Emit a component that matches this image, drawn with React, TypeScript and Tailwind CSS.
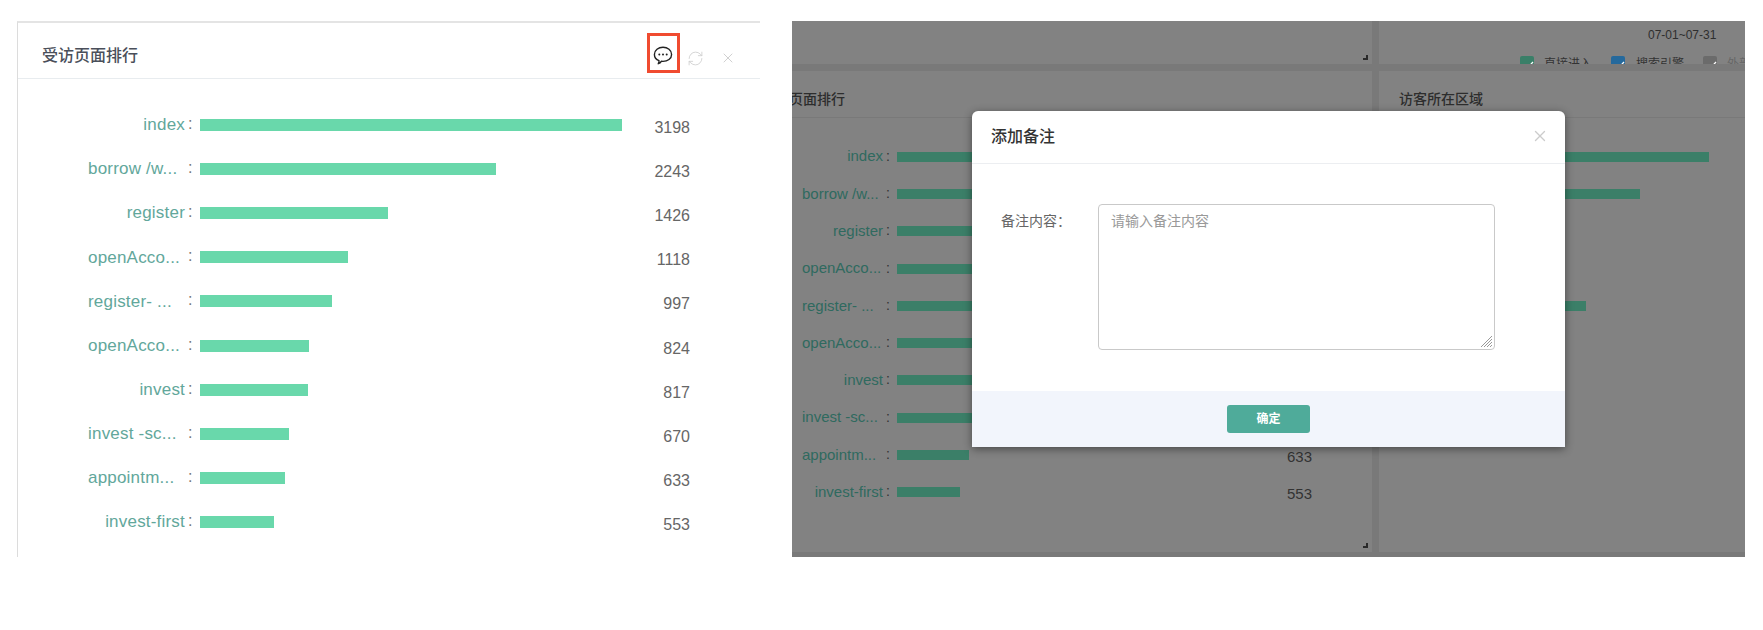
import { RefreshCw, X } from "lucide-react"

const pages = [
  { name: "index", width: 422, value: 3198 },
  { name: "borrow /w...", width: 296, value: 2243, cut: true },
  { name: "register", width: 188, value: 1426 },
  { name: "openAcco...", width: 148, value: 1118, cut: true },
  { name: "register- ...", width: 132, value: 997, cut: true },
  { name: "openAcco...", width: 109, value: 824, cut: true },
  { name: "invest", width: 108, value: 817 },
  { name: "invest -sc...", width: 89, value: 670, cut: true },
  { name: "appointm...", width: 85, value: 633, cut: true },
  { name: "invest-first", width: 74, value: 553 },
]

const regionBars = [229, 160, 60, 50, 106]

function ChatIcon() {
  return (
    <svg width="20" height="19" viewBox="0 0 20 19" fill="none" className="text-[#222]">
      <path
        d="M10 1.2c4.600 0 8.600 3 8.600 7.200s-4 7-8.600 7c-.6 0-1.200 0-1.700-.1-.5.9-1.700 2-3 2.400.5-.9.8-2 .7-3.100C3 13.400 1.400 11.100 1.400 8.400 1.400 4.200 5.400 1.200 10 1.200z"
        stroke="currentColor"
        strokeWidth="1.4"
        strokeLinejoin="round"
      />
      <circle cx="6.300" cy="8.500" r="1" fill="currentColor" />
      <circle cx="10" cy="8.500" r="1" fill="currentColor" />
      <circle cx="13.700" cy="8.500" r="1" fill="currentColor" />
    </svg>
  )
}

function Corner() {
  return <div className="h-[5px] w-[5px] border-b-2 border-r-2 border-[#2a2a2a]" />
}

function LegendBox({ color }: { color: string }) {
  return (
    <div className={"flex h-[14px] w-[14px] shrink-0 items-end justify-end rounded-[2px] " + color}>
      <svg width="10" height="12" viewBox="0 0 10 12" fill="none">
        <path d="M1 8l2.500 2L9 4" stroke="#fff" strokeWidth="1.300" />
      </svg>
    </div>
  )
}

export default function App() {
  return (
    <div className="flex h-[630px] w-[1763px] overflow-hidden bg-white pt-[21px] font-['Liberation_Sans','Noto_Sans_CJK_SC',sans-serif]">
      {/* left: the widget on its own */}
      <section className="ml-[17px] h-[536px] w-[743px] border-l border-t-2 border-[#e4e4e4] border-l-[#dcdcdc]">
        <header className="flex h-[56px] border-b border-[#e8ecef]">
          <h3 className="ml-[24px] mt-[21px] text-base leading-6 font-medium text-[#4a4f5a]">受访页面排行</h3>
          <div className="ml-auto mr-[14px] mt-[10px] flex">
            <div className="flex h-[40px] w-[33px] items-center justify-center border-[3px] border-[#f04b30] pt-1 pr-[2px]">
              <ChatIcon />
            </div>
            <div className="flex w-[30px] items-center justify-center pt-[5px]">
              <RefreshCw size={17} strokeWidth={1.2} className="text-[#cfcfcf]" />
            </div>
            <div className="flex w-[36px] items-center justify-center pt-[5px]">
              <X size={16} strokeWidth={1} className="text-[#b8b8b8]" />
            </div>
          </div>
        </header>
        <div className="pt-[24px]">
          {pages.map((p, i) => (
            <div key={i} className="flex h-[44.1px] items-center">
              <span className={"ml-[70px] w-[97px] whitespace-nowrap text-[17px] tracking-[0.2px] text-[#62a79b] " + (p.cut ? "text-left" : "text-right")}>
                {p.name}
              </span>
              <span className="w-[15px] pb-[2px] pl-[3px] text-base text-[#777]">:</span>
              <div className="h-3 bg-[#69d8ab]" style={{ width: p.width }} />
              <span className="ml-auto mr-[70px] pt-[6px] text-base text-[#666]">{p.value}</span>
            </div>
          ))}
        </div>
      </section>

      {/* right: the same dashboard behind the dimmed dialog */}
      <section className="relative ml-[32px] flex h-[536px] w-[953px] flex-col bg-[#797979]">
        <div className="flex h-[43px]">
          <div className="flex w-[580px] items-end justify-end bg-[#828282] pb-[4px] pr-[4px]">
            <Corner />
          </div>
          <div className="ml-[7px] flex-1 overflow-hidden bg-[#828282] pl-[141px]">
            <div className="pl-[128px] pt-[7px] text-xs leading-[14px] text-[#2e2e2e]">07-01~07-31</div>
            <div className="mt-[14px] flex items-start text-xs leading-[16px] text-[#333]">
              <LegendBox color="bg-[#3a7f68]" />
              <span className="ml-[10px] w-[58px] shrink-0 whitespace-nowrap">直接进入</span>
              <div className="ml-[9px]">
                <LegendBox color="bg-[#25699c]" />
              </div>
              <span className="ml-[11px] w-[56px] shrink-0 whitespace-nowrap">搜索引擎</span>
              <div className="ml-[11px]">
                <LegendBox color="bg-[#6b6b6b]" />
              </div>
              <span className="ml-[10px] shrink-0 whitespace-nowrap text-[#666]">外部链接</span>
            </div>
          </div>
        </div>
        <div className="flex min-h-0 flex-1 pt-[7px] pb-[5px]">
          <div className="flex w-[580px] flex-col bg-[#828282]">
            <div className="flex h-[47px] items-center overflow-hidden border-b border-[#797979]">
              <h3 className="-ml-[3px] pt-[9px] text-sm font-medium text-[#2d2d2d]">页面排行</h3>
            </div>
            <div className="pt-[20px]">
              {pages.map((p, i) => (
                <div key={i} className="flex h-[37.3px] items-center">
                  <span className={"ml-[10px] w-[81px] whitespace-nowrap text-[15px] text-[#2f6a5f] " + (p.cut ? "text-left" : "text-right")}>
                    {p.name}
                  </span>
                  <span className="w-[14px] pb-[2px] pl-[3px] text-sm text-[#333]">:</span>
                  <div className="h-[10px] bg-[#3b7f68]" style={{ width: p.width * 0.85 }} />
                  <span className="ml-auto mr-[60px] pt-1 text-[15px] text-[#333]">{p.value}</span>
                </div>
              ))}
            </div>
            <div className="mt-auto flex justify-end pb-[4px] pr-[4px]">
              <Corner />
            </div>
          </div>
          <div className="ml-[7px] flex flex-1 flex-col bg-[#828282]">
            <div className="flex h-[47px] items-center border-b border-[#797979] pl-[20px]">
              <h3 className="pt-[9px] text-sm font-medium text-[#2d2d2d]">访客所在区域</h3>
            </div>
            <div className="pt-[20px]">
              {regionBars.map((w, i) => (
                <div key={i} className="flex h-[37.3px] items-center pl-[101px]">
                  <div className="h-[10px] bg-[#3b7f68]" style={{ width: w }} />
                </div>
              ))}
            </div>
          </div>
        </div>

        {/* dialog */}
        <div className="absolute left-[180px] top-[90px] flex h-[336px] w-[593px] flex-col rounded-t-md bg-white shadow-[0_2px_8px_rgba(0,0,0,0.45)]">
          <div className="flex h-[53px] items-center justify-between border-b border-[#eceef1] pl-[19px] pr-[16px]">
            <h4 className="text-base font-medium text-[#333]">添加备注</h4>
            <X size={18} strokeWidth={1.8} className="-mt-[2px] text-[#cccccc]" />
          </div>
          <div className="flex flex-1 pt-[40px]">
            <label className="ml-[29px] w-[97px] pt-[7px] text-sm leading-5 text-[#666]">备注内容：</label>
            <div className="relative h-[146px] w-[397px]">
              <textarea
                placeholder="请输入备注内容"
                className="h-full w-full resize-none rounded border border-[#c9c9c9] px-3 py-[6px] text-sm leading-5 placeholder:text-[#999]"
              />
              <svg width="13" height="13" viewBox="0 0 13 13" className="absolute bottom-[2px] right-[2px] text-[#999]" stroke="currentColor">
                <path d="M1 12L12 1M4 12l8-8M7 12l5-5M10 12l2-2" />
              </svg>
            </div>
          </div>
          <div className="flex h-[56px] items-center justify-center bg-[#f2f5fc]">
            <button className="h-[28px] w-[83px] rounded-[3px] bg-[#4fab9a] text-xs font-bold text-white">确定</button>
          </div>
        </div>
      </section>
    </div>
  )
}
